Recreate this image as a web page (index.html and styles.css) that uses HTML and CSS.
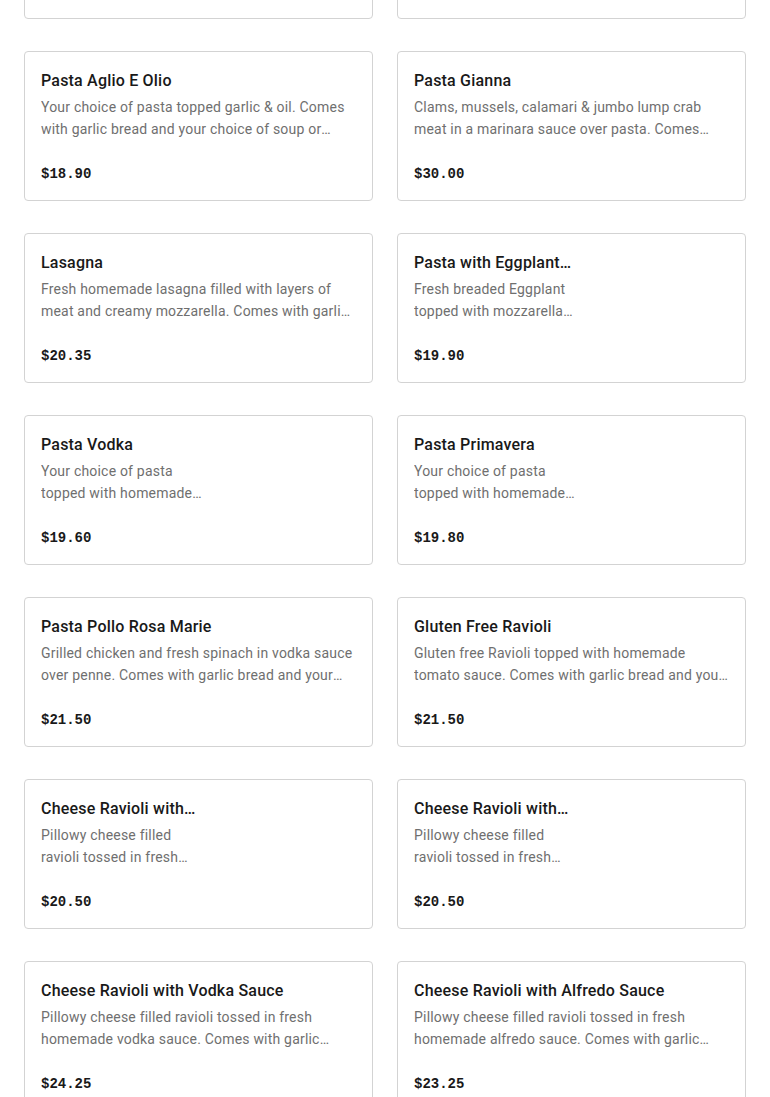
FILE: index.html
```html
<!DOCTYPE html>
<html lang="en">
<head>
<meta charset="utf-8">
<title>Menu</title>
<link rel="stylesheet" href="styles.css">
</head>
<body>
<div class="grid">
  <div class="card"></div>
  <div class="card"></div>

  <div class="card">
    <div class="info">
      <div class="title">Pasta Aglio E Olio</div>
      <div class="desc">Your choice of pasta topped garlic &amp; oil. Comes with garlic bread and your choice of soup or salad.</div>
    </div>
    <div class="price">$18.90</div>
  </div>
  <div class="card">
    <div class="info">
      <div class="title">Pasta Gianna</div>
      <div class="desc">Clams, mussels, calamari &amp; jumbo lump crab meat in a marinara sauce over pasta. Comes with garlic bread.</div>
    </div>
    <div class="price">$30.00</div>
  </div>

  <div class="card">
    <div class="info">
      <div class="title">Lasagna</div>
      <div class="desc">Fresh homemade lasagna filled with layers of meat and creamy mozzarella. Comes with garlic bread.</div>
    </div>
    <div class="price">$20.35</div>
  </div>
  <div class="card narrow">
    <div class="info">
      <div class="title">Pasta with Eggplant Parmigiana</div>
      <div class="desc">Fresh breaded Eggplant topped with mozzarella cheese and tomato sauce.</div>
    </div>
    <div class="price">$19.90</div>
  </div>

  <div class="card narrow">
    <div class="info">
      <div class="title">Pasta Vodka</div>
      <div class="desc">Your choice of pasta topped with homemade vodka sauce.</div>
    </div>
    <div class="price">$19.60</div>
  </div>
  <div class="card narrow">
    <div class="info">
      <div class="title">Pasta Primavera</div>
      <div class="desc">Your choice of pasta topped with homemade vegetables.</div>
    </div>
    <div class="price">$19.80</div>
  </div>

  <div class="card">
    <div class="info">
      <div class="title">Pasta Pollo Rosa Marie</div>
      <div class="desc">Grilled chicken and fresh spinach in vodka sauce over penne. Comes with garlic bread and your choice of soup.</div>
    </div>
    <div class="price">$21.50</div>
  </div>
  <div class="card">
    <div class="info">
      <div class="title">Gluten Free Ravioli</div>
      <div class="desc">Gluten free Ravioli topped with homemade tomato sauce. Comes with garlic bread and your choice of soup.</div>
    </div>
    <div class="price">$21.50</div>
  </div>

  <div class="card narrow">
    <div class="info">
      <div class="title">Cheese Ravioli with Tomato Sauce</div>
      <div class="desc">Pillowy cheese filled ravioli tossed in fresh homemade tomato sauce.</div>
    </div>
    <div class="price">$20.50</div>
  </div>
  <div class="card narrow">
    <div class="info">
      <div class="title">Cheese Ravioli with Meat Sauce</div>
      <div class="desc">Pillowy cheese filled ravioli tossed in fresh homemade meat sauce.</div>
    </div>
    <div class="price">$20.50</div>
  </div>

  <div class="card">
    <div class="info">
      <div class="title">Cheese Ravioli with Vodka Sauce</div>
      <div class="desc">Pillowy cheese filled ravioli tossed in fresh homemade vodka sauce. Comes with garlic bread.</div>
    </div>
    <div class="price">$24.25</div>
  </div>
  <div class="card">
    <div class="info">
      <div class="title">Cheese Ravioli with Alfredo Sauce</div>
      <div class="desc">Pillowy cheese filled ravioli tossed in fresh homemade alfredo sauce. Comes with garlic bread.</div>
    </div>
    <div class="price">$23.25</div>
  </div>
</div>
</body>
</html>
```
FILE: styles.css
```css
* { box-sizing: border-box; }
html, body { margin: 0; padding: 0; background: #ffffff; }
body {
  font-family: Roboto, "Open Sans", "Liberation Sans", sans-serif;
  color: #191919;
  overflow: hidden;
}
.grid {
  display: grid;
  grid-template-columns: 1fr 1fr;
  column-gap: 24px;
  row-gap: 32px;
  padding: 0 24px;
  margin-top: -131px;
}
.card {
  height: 150px;
  border: 1px solid #d3d3d3;
  border-radius: 4px;
  padding: 17px 16px 0 16px;
  display: flex;
  flex-direction: column;
}
.info { min-width: 0; }
.narrow .info { width: 166px; }
.narrow .title { width: 158px; }
.title {
  font-size: 16px;
  line-height: 24px;
  font-weight: 500;
  letter-spacing: 0.2px;
  color: #191919;
  white-space: nowrap;
  overflow: hidden;
  text-overflow: ellipsis;
}
.desc {
  margin-top: 3px;
  font-size: 14px;
  line-height: 22px;
  letter-spacing: 0.2px;
  color: #6f6f6f;
  display: -webkit-box;
  -webkit-line-clamp: 2;
  -webkit-box-orient: vertical;
  overflow: hidden;
}
.price {
  margin-top: 24px;
  font-family: "Liberation Mono", "DejaVu Sans Mono", monospace;
  font-size: 14px;
  line-height: 20px;
  font-weight: 700;
  color: #191919;
}
```
